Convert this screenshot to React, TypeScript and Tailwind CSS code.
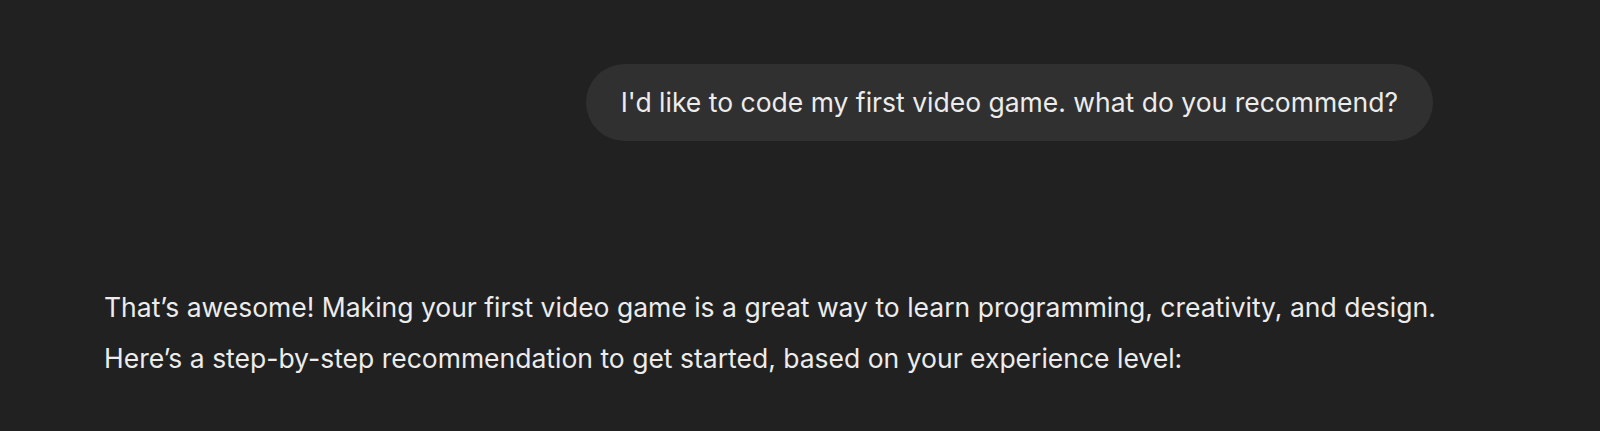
export default function App() {
  return (
    <div
      className="h-[431px] w-full overflow-hidden bg-[#212121] text-[#ececec] pl-[104px] pt-[64px]"
      style={{ fontFamily: "Inter, 'Noto Sans', sans-serif" }}
    >
      <div className="w-[1329px]">
        <div className="flex justify-end">
          <div className="h-[77px] flex items-center rounded-full bg-[#303030] px-[35px] text-[26.5px] whitespace-nowrap">
            I'd like to code my first video game. what do you recommend?
          </div>
        </div>
        <div className="mt-[141px] text-[26.5px] leading-[51px]">
          <p className="whitespace-nowrap">
            That’s awesome! Making your first video game is a great way to learn programming, creativity, and design.
          </p>
          <p className="whitespace-nowrap">
            Here’s a step-by-step recommendation to get started, based on your experience level:
          </p>
        </div>
      </div>
    </div>
  );
}
